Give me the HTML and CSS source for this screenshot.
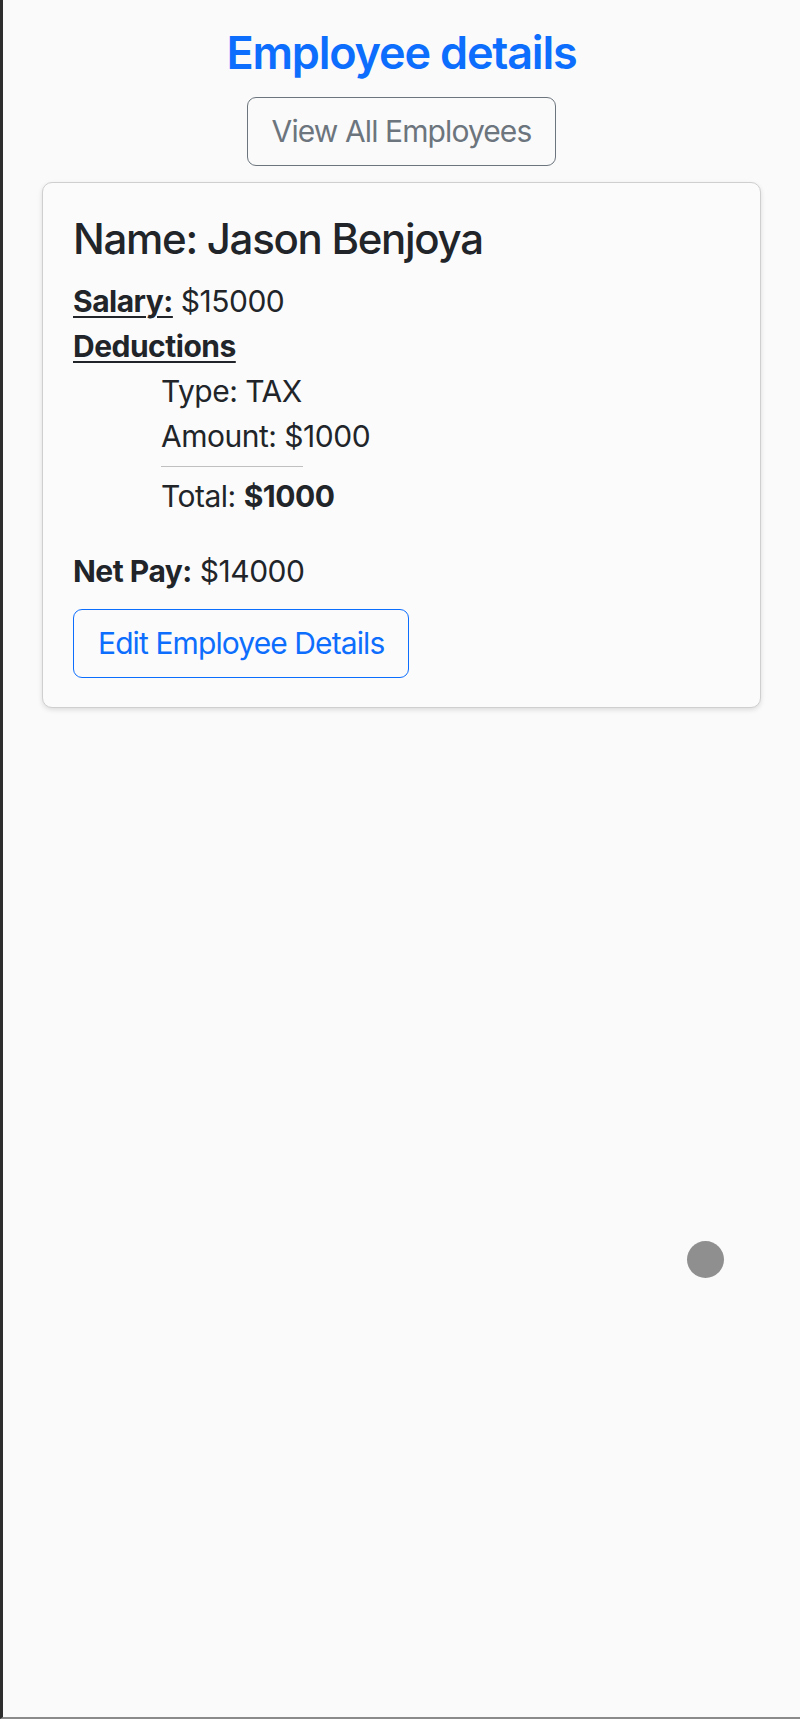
FILE: index.html
```html
<!DOCTYPE html>
<html lang="en">
<head>
<meta charset="utf-8">
<title>Employee details</title>
<link rel="stylesheet" href="styles.css">
</head>
<body>
<div class="window">
  <header class="page-head">
    <h1 class="page-title">Employee details</h1>
    <button class="btn btn-outline-secondary" type="button">View All Employees</button>
  </header>
  <section class="card">
    <h3 class="card-title">Name: Jason Benjoya</h3>
    <div class="line"><span class="label-u">Salary:</span> $15000</div>
    <div class="line"><span class="label-u">Deductions</span></div>
    <div class="deductions">
      <div class="line">Type: TAX</div>
      <div class="line">Amount: $1000</div>
      <hr class="divider">
      <div class="line">Total: <b>$1000</b></div>
    </div>
    <div class="line net"><b>Net Pay:</b> $14000</div>
    <button class="btn btn-outline-primary" type="button">Edit Employee Details</button>
  </section>
  <div class="cursor-dot"></div>
</div>
</body>
</html>
```
FILE: styles.css
```css
html, body {
  margin: 0;
  padding: 0;
}
body {
  background: #fafafa;
  font-family: Inter, "Noto Sans", "Liberation Sans", sans-serif;
  color: #212529;
  letter-spacing: -0.5px;
}
.window {
  position: relative;
  box-sizing: border-box;
  min-height: 1719px;
  border-left: 3px solid #2d2d2d;
  border-bottom: 2px solid #8a8a8a;
  padding-top: 26px;
}
.page-head {
  display: flex;
  flex-direction: column;
  align-items: center;
}
.page-title {
  margin: 0;
  font-size: 45px;
  line-height: 54px;
  font-weight: 600;
  letter-spacing: -1.2px;
  color: #0d6efd;
}
.btn {
  font-family: inherit;
  font-size: 30px;
  line-height: 45px;
  letter-spacing: -0.9px;
  padding: 11px 24px;
  border-radius: 9px;
  background: transparent;
  font-weight: 400;
  cursor: pointer;
}
.btn-outline-secondary {
  margin-top: 17px;
  color: #6c757d;
  border: 1px solid #6c757d;
}
.btn-outline-primary {
  color: #0d6efd;
  border: 1px solid #0d6efd;
}
.card {
  margin: 16px 39px 0;
  padding: 31px 30px 29px;
  border: 1px solid #cfcfcf;
  border-radius: 10px;
  background: #fbfbfb;
  box-shadow: 0 2px 5px rgba(0, 0, 0, 0.12);
}
.card-title {
  margin: 0 0 15px;
  font-size: 42px;
  line-height: 50px;
  font-weight: 500;
  letter-spacing: -1.3px;
}
.line {
  font-size: 30px;
  line-height: 45px;
  letter-spacing: -0.5px;
}
.label-u {
  font-weight: 700;
  text-decoration: underline;
  text-underline-offset: 4px;
  text-decoration-thickness: 2px;
}
.deductions {
  padding-left: 88px;
  margin-bottom: 30px;
}
.divider {
  width: 142px;
  margin: 7px 0 7px;
  border: 0;
  border-top: 1px solid #c0c0c0;
  height: 0;
}
.net {
  margin-bottom: 15px;
}
.cursor-dot {
  position: absolute;
  left: 684px;
  top: 1241px;
  width: 37px;
  height: 37px;
  border-radius: 50%;
  background: #8f8f8f;
}
```
